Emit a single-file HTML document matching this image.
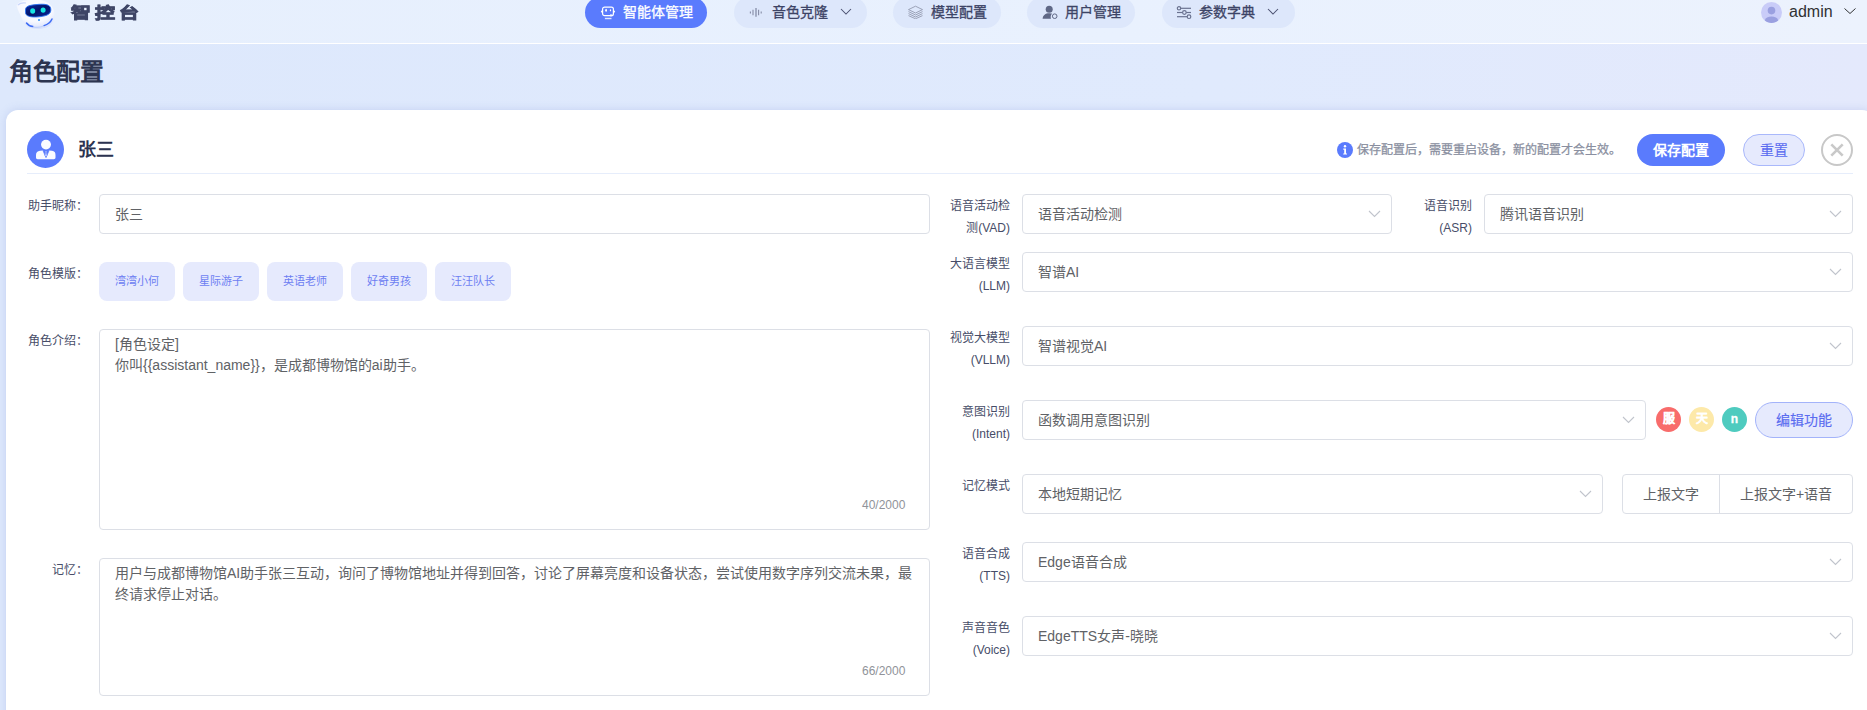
<!DOCTYPE html>
<html lang="zh-CN"><head><meta charset="utf-8">
<style>
*{box-sizing:border-box;margin:0;padding:0}
html,body{width:1867px;height:710px;overflow:hidden}
body{position:relative;font-family:"Liberation Sans",sans-serif;background:linear-gradient(90deg,#dde8fc 0%,#e0eafd 65%,#e4e9fc 100%);color:#303133}
.abs{position:absolute}
#hdr{position:absolute;left:0;top:0;width:1867px;height:44px;background:linear-gradient(90deg,#e6effd,#e9f1fe 60%,#ecf2fd);border-bottom:1px solid #fff}
.pill{position:absolute;top:-3px;height:31px;border-radius:16px;background:#dde7fb;color:#3d4466;font-size:14px;font-weight:500;line-height:31px;white-space:nowrap}
.pill.active{background:#5a7bfd;color:#fff}
.pill span{position:absolute;top:0;-webkit-text-stroke:0.3px currentColor}
.chev{position:absolute}
#title{position:absolute;left:9px;top:55px;font-size:24px;font-weight:700;color:#2c3450;line-height:34px;letter-spacing:-0.5px}
#card{position:absolute;left:6px;top:110px;width:1868px;height:640px;background:#fff;border-radius:12px;box-shadow:0 0 8px rgba(120,140,210,.25)}
.lbl{position:absolute;font-size:12px;color:#474d68;line-height:22px;text-align:right;white-space:nowrap}
.box{position:absolute;border:1px solid #dcdfe6;border-radius:4px;background:#fff}
.val{position:absolute;font-size:14px;color:#606266;white-space:nowrap;line-height:20px}
.tag{position:absolute;top:262px;width:76px;height:39px;border-radius:8px;background:#e6eafd;color:#6d7ef2;font-size:11px;line-height:38px;text-align:center}
.circ{width:25px;height:25px;border-radius:50%;color:#fff;font-size:12px;font-weight:700;text-align:center;line-height:25px;-webkit-text-stroke:0.3px #fff}
.sel-chev{position:absolute;width:11px;height:7px}
</style></head>
<body>
<div id="hdr">
<svg class="abs" style="left:0;top:0" width="60" height="32" viewBox="0 0 60 32">
 <defs>
  <radialGradient id="hg" cx="50%" cy="30%" r="70%"><stop offset="0" stop-color="#ffffff"/><stop offset=".65" stop-color="#f6f8ff"/><stop offset="1" stop-color="#d6dffc"/></radialGradient>
  <linearGradient id="vg" x1="0" y1="0" x2="1" y2="1"><stop offset="0" stop-color="#0c2aa0"/><stop offset=".5" stop-color="#03156a"/><stop offset="1" stop-color="#0a2a9a"/></linearGradient>
  <filter id="gl" x="-50%" y="-50%" width="200%" height="200%"><feGaussianBlur stdDeviation="0.5"/></filter>
 </defs>
 <path d="M16.5 5.5 C18 2 24 0 33 -0.5 C45 -1 54 4 54.5 14 C55 23 48 29 38 29 C29 29 23.5 25 22 19 C21 15 17.5 11 16.5 5.5Z" fill="url(#hg)"/>
 <path d="M18 5 C20 3 23 2.5 26 3" stroke="#c9d6fb" stroke-width="1.2" fill="none"/>
 <path d="M25.5 10 C25.5 6.5 28.5 5.3 36 4.6 C44 3.8 50.5 4 50.8 9 C51.2 13.8 48 15.8 39 16.8 C30 17.6 25.5 16 25.5 12.5Z" fill="url(#vg)" stroke="#2b74f3" stroke-width="0.9"/>
 <g filter="url(#gl)">
 <ellipse cx="32.7" cy="11" rx="2.5" ry="2.7" fill="#17e6e2"/>
 <ellipse cx="43.1" cy="10.1" rx="2.5" ry="2.7" fill="#17e6e2"/>
 </g>
 <circle cx="39" cy="20" r="1" fill="#2a8cf5"/>
 <path d="M26.5 23 C28 25 30 26.3 33 26.6" stroke="#3d6cf4" stroke-width="1.5" fill="none" stroke-linecap="round"/>
 <path d="M44 25.6 C47.5 24.5 50.5 22.5 52 19" stroke="#3d6cf4" stroke-width="1.5" fill="none" stroke-linecap="round"/>
 <path d="M33 26.8 C36 27.6 40 27.6 43.5 26" stroke="#bfd0fa" stroke-width="1.3" fill="none"/>
</svg>
<div class="abs" style="left:71px;top:0.5px;font-size:18px;font-weight:900;color:#3e4566;letter-spacing:3.8px;line-height:24px;white-space:nowrap;-webkit-text-stroke:0.9px #3e4566;transform:scale(1.11,0.85);transform-origin:0 50%">智控台</div>

<div class="pill active" style="left:585px;width:122px">
 <svg class="abs" style="left:15px;top:8.5px" width="16" height="14" viewBox="0 0 16 14">
  <rect x="2.6" y="1.1" width="10.8" height="8.6" rx="2" fill="none" stroke="#fff" stroke-width="1.2"/>
  <path d="M2 4.3 L0.8 5.6 L2 6.9Z" fill="#fff"/>
  <path d="M14 4.3 L15.2 5.6 L14 6.9Z" fill="#fff"/>
  <ellipse cx="6.1" cy="4.3" rx="0.9" ry="1.5" fill="#fff"/>
  <ellipse cx="10.5" cy="4.3" rx="0.7" ry="1.1" fill="#fff"/>
  <circle cx="11" cy="9.4" r="1.1" fill="#fff"/>
  <rect x="4.9" y="11.8" width="6.6" height="1.4" fill="#dfe5ff"/>
 </svg>
 <span style="left:38px;font-weight:500">智能体管理</span>
</div>

<div class="pill" style="left:734px;width:133px">
 <svg class="abs" style="left:15px;top:6px" width="14" height="14" viewBox="0 0 14 14">
  <g stroke="#858ca6" stroke-linecap="butt">
   <line x1="1.4" y1="8.4" x2="1.4" y2="10.6" stroke-width="1.1"/>
   <line x1="4" y1="6.8" x2="4" y2="12.2" stroke-width="1.1"/>
   <line x1="7" y1="5" x2="7" y2="13.8" stroke-width="1.3"/>
   <line x1="9.6" y1="6.8" x2="9.6" y2="12.2" stroke-width="1.1"/>
   <line x1="12.2" y1="8.4" x2="12.2" y2="10.6" stroke-width="1.1"/>
  </g>
 </svg>
 <span style="left:38px">音色克隆</span>
 <svg class="abs" style="left:106px;top:11px" width="12" height="7" viewBox="0 0 12 7"><path d="M1 1 L6 6 L11 1" fill="none" stroke="#4a5070" stroke-width="1.05"/></svg>
</div>

<div class="pill" style="left:893px;width:108px">
 <svg class="abs" style="left:14px;top:8px" width="17" height="14" viewBox="0 0 17 14">
  <g fill="none" stroke="#8a90a6" stroke-width="0.8">
   <path d="M1.5 4.6 L8.5 1.2 L15.5 4.6 L8.5 8Z"/>
   <path d="M1.5 6.6 L8.5 10 L15.5 6.6"/>
   <path d="M1.5 8.6 L8.5 12 L15.5 8.6"/>
   <path d="M1.5 10.6 L8.5 13.8 L15.5 10.6"/>
  </g>
 </svg>
 <span style="left:38px">模型配置</span>
</div>

<div class="pill" style="left:1027px;width:108px">
 <svg class="abs" style="left:14px;top:8px" width="17" height="14" viewBox="0 0 17 14">
  <circle cx="8.2" cy="4.2" r="3.5" fill="#5f6886"/>
  <path d="M1.6 13.8 C2 10 4.5 8.2 8 8.2 C9.5 8.2 10.5 8.4 11.2 8.7 C9.8 9.6 9.3 11.5 10 13.8Z" fill="#5f6886"/>
  <circle cx="13.7" cy="11.2" r="2.3" fill="none" stroke="#5f6886" stroke-width="1"/>
 </svg>
 <span style="left:38px">用户管理</span>
</div>

<div class="pill" style="left:1162px;width:133px">
 <svg class="abs" style="left:14px;top:9px" width="16" height="14" viewBox="0 0 16 14">
  <g fill="none" stroke="#6a7290" stroke-width="1.2">
   <line x1="4.6" y1="2.3" x2="15" y2="2.3"/>
   <circle cx="3" cy="2.3" r="1.7"/>
   <line x1="1" y1="6.5" x2="6.6" y2="6.5"/><line x1="10.2" y1="6.5" x2="15" y2="6.5"/>
   <circle cx="8.4" cy="6.5" r="1.8"/>
   <line x1="1" y1="10.7" x2="11.2" y2="10.7"/>
   <circle cx="13" cy="10.7" r="1.8"/>
  </g>
 </svg>
 <span style="left:37px">参数字典</span>
 <svg class="abs" style="left:105px;top:11px" width="12" height="7" viewBox="0 0 12 7"><path d="M1 1 L6 6 L11 1" fill="none" stroke="#4a5070" stroke-width="1.05"/></svg>
</div>

<svg class="abs" style="left:1761px;top:2px" width="21" height="21" viewBox="0 0 21 21">
 <circle cx="10.5" cy="10.5" r="10.5" fill="#c9ccf8"/>
 <circle cx="10.5" cy="8.6" r="3.8" fill="#9aa0e0"/>
 <path d="M3.8 18.6 C4.5 15.6 7 14.6 10.5 14.6 C14 14.6 16.5 15.6 17.2 18.6 C15.5 20.3 13 21 10.5 21 C8 21 5.5 20.3 3.8 18.6Z" fill="#9aa0e0"/>
</svg>
<div class="abs" style="left:1789px;top:2px;font-size:16px;color:#303133;line-height:20px">admin</div>
<svg class="abs" style="left:1843px;top:7px" width="14" height="8" viewBox="0 0 14 8"><path d="M1.5 1.5 L7 6.5 L12.5 1.5" fill="none" stroke="#303133" stroke-width="1"/></svg>
</div>
<div id="title">角色配置</div>
<div id="card"></div>
<svg class="abs" style="left:27px;top:131px" width="37" height="37" viewBox="0 0 37 37">
 <circle cx="18.5" cy="18.5" r="18.5" fill="#5a7bfd"/>
 <ellipse cx="19" cy="13.6" rx="5" ry="4.8" fill="#fafbff"/>
 <path d="M9 24 C9 21.5 10.5 20.2 13 19.8 L16 19.6 L19 26.6 L22 19.6 L25 19.8 C27.5 20.2 28.5 21.5 28.5 24 L28.5 26.6 C28.5 27.6 27.8 28.2 26.8 28.2 L10.7 28.2 C9.7 28.2 9 27.6 9 26.6Z" fill="#fafbff"/>
 <path d="M16 19.6 L19 26.6 L22 19.6" fill="none" stroke="#5a7bfd" stroke-width="0.8"/>
 <path d="M18.2 20 L19.8 20 L19.4 21.4 L19.9 24.5 L19 25.8 L18.1 24.5 L18.6 21.4Z" fill="#fafbff" stroke="#5a7bfd" stroke-width="0.5"/>
</svg>
<div class="abs" style="left:78px;top:136px;font-size:18px;font-weight:700;color:#2c3350;line-height:28px">张三</div>
<div class="abs" style="left:27px;top:173px;width:1826px;height:1px;background:#e6edfb"></div>

<svg class="abs" style="left:1337px;top:142px" width="16" height="16" viewBox="0 0 16 16">
 <circle cx="8" cy="8" r="8" fill="#5a7bfd"/>
 <circle cx="8" cy="4.3" r="1.2" fill="#fff"/>
 <path d="M6.3 6.6 L9 6.6 L9 11.4 L10 11.4 L10 12.5 L6.2 12.5 L6.2 11.4 L7.2 11.4 L7.2 7.7 L6.3 7.7Z" fill="#fff"/>
</svg>
<div class="abs" style="left:1357px;top:140px;font-size:12px;font-weight:500;color:#8a8fa0;line-height:20px;white-space:nowrap;-webkit-text-stroke:0.25px #8a8fa0">保存配置后，需要重启设备，新的配置才会生效。</div>
<div class="abs" style="left:1637px;top:134px;width:88px;height:32px;border-radius:16px;background:#5a7bfd;color:#fff;font-size:14px;font-weight:700;line-height:33px;text-align:center">保存配置</div>
<div class="abs" style="left:1743px;top:134px;width:62px;height:32px;border-radius:16px;background:#e6eafd;border:1px solid #a9b8fb;color:#5a6cf0;font-size:14px;font-weight:500;line-height:30px;text-align:center;-webkit-text-stroke:0.1px #5a6cf0">重置</div>
<svg class="abs" style="left:1821px;top:134px" width="32" height="32" viewBox="0 0 32 32">
 <circle cx="16" cy="16" r="15" fill="#fff" stroke="#c8c8c8" stroke-width="2"/>
 <path d="M10.3 10.3 L21.7 21.7 M21.7 10.3 L10.3 21.7" stroke="#c9c9c9" stroke-width="2.6"/>
</svg>

<div class="lbl" style="right:1779px;top:195px">助手昵称：</div>
<div class="box" style="left:99px;top:194px;width:831px;height:40px"></div>
<div class="val" style="left:115px;top:204px">张三</div>

<div class="lbl" style="right:1779px;top:263px">角色模版：</div>
<div class="tag" style="left:99px">湾湾小何</div>
<div class="tag" style="left:183px">星际游子</div>
<div class="tag" style="left:267px">英语老师</div>
<div class="tag" style="left:351px">好奇男孩</div>
<div class="tag" style="left:435px">汪汪队长</div>

<div class="lbl" style="right:1779px;top:330px">角色介绍：</div>
<div class="box" style="left:99px;top:329px;width:831px;height:201px"></div>
<div class="val" style="left:115px;top:334px;line-height:21px">[角色设定]<br>你叫{{assistant_name}}，是成都博物馆的ai助手。</div>
<div class="abs" style="left:862px;top:496px;font-size:12px;color:#909399;line-height:18px">40/2000</div>

<div class="lbl" style="right:1779px;top:559px">记忆：</div>
<div class="box" style="left:99px;top:558px;width:831px;height:138px"></div>
<div class="val" style="left:115px;top:563px;line-height:21px;width:805px;white-space:normal">用户与成都博物馆AI助手张三互动，询问了博物馆地址并得到回答，讨论了屏幕亮度和设备状态，尝试使用数字序列交流未果，最终请求停止对话。</div>
<div class="abs" style="left:862px;top:662px;font-size:12px;color:#909399;line-height:18px">66/2000</div>
<div class="lbl" style="right:857px;top:195px">语音活动检<br>测(VAD)</div><div class="box" style="left:1022px;top:194px;width:370px;height:40px"></div><div class="val" style="left:1038px;top:204px">语音活动检测</div><svg class="abs" style="left:1368px;top:210px" width="13" height="8" viewBox="0 0 13 8"><path d="M1 1 L6.5 6.5 L12 1" fill="none" stroke="#c0c4cc" stroke-width="1.1"/></svg><div class="lbl" style="right:395px;top:195px">语音识别<br>(ASR)</div><div class="box" style="left:1484px;top:194px;width:369px;height:40px"></div><div class="val" style="left:1500px;top:204px">腾讯语音识别</div><svg class="abs" style="left:1829px;top:210px" width="13" height="8" viewBox="0 0 13 8"><path d="M1 1 L6.5 6.5 L12 1" fill="none" stroke="#c0c4cc" stroke-width="1.1"/></svg><div class="lbl" style="right:857px;top:253px">大语言模型<br>(LLM)</div><div class="box" style="left:1022px;top:252px;width:831px;height:40px"></div><div class="val" style="left:1038px;top:262px">智谱AI</div><svg class="abs" style="left:1829px;top:268px" width="13" height="8" viewBox="0 0 13 8"><path d="M1 1 L6.5 6.5 L12 1" fill="none" stroke="#c0c4cc" stroke-width="1.1"/></svg><div class="lbl" style="right:857px;top:327px">视觉大模型<br>(VLLM)</div><div class="box" style="left:1022px;top:326px;width:831px;height:40px"></div><div class="val" style="left:1038px;top:336px">智谱视觉AI</div><svg class="abs" style="left:1829px;top:342px" width="13" height="8" viewBox="0 0 13 8"><path d="M1 1 L6.5 6.5 L12 1" fill="none" stroke="#c0c4cc" stroke-width="1.1"/></svg><div class="lbl" style="right:857px;top:401px">意图识别<br>(Intent)</div><div class="box" style="left:1022px;top:400px;width:624px;height:40px"></div><div class="val" style="left:1038px;top:410px">函数调用意图识别</div><svg class="abs" style="left:1622px;top:416px" width="13" height="8" viewBox="0 0 13 8"><path d="M1 1 L6.5 6.5 L12 1" fill="none" stroke="#c0c4cc" stroke-width="1.1"/></svg><div class="abs circ" style="left:1656px;top:407px;background:#f86c6b">服</div>
<div class="abs circ" style="left:1689px;top:407px;background:#fde9a9">天</div>
<div class="abs circ" style="left:1722px;top:407px;background:#4ecbbf">n</div>
<div class="abs" style="left:1755px;top:402px;width:98px;height:36px;border-radius:18px;background:#e6eafd;border:1px solid #a3b3fa;color:#5a6cf0;font-size:14px;font-weight:500;line-height:34px;text-align:center;-webkit-text-stroke:0.15px #5a6cf0">编辑功能</div>
<div class="lbl" style="right:857px;top:475px">记忆模式</div><div class="box" style="left:1022px;top:474px;width:581px;height:40px"></div><div class="val" style="left:1038px;top:484px">本地短期记忆</div><svg class="abs" style="left:1579px;top:490px" width="13" height="8" viewBox="0 0 13 8"><path d="M1 1 L6.5 6.5 L12 1" fill="none" stroke="#c0c4cc" stroke-width="1.1"/></svg><div class="box" style="left:1622px;top:474px;width:231px;height:40px"></div>
<div class="abs" style="left:1719px;top:475px;width:1px;height:38px;background:#dcdfe6"></div>
<div class="val" style="left:1643px;top:484px">上报文字</div>
<div class="val" style="left:1740px;top:484px">上报文字+语音</div>
<div class="lbl" style="right:857px;top:543px">语音合成<br>(TTS)</div><div class="box" style="left:1022px;top:542px;width:831px;height:40px"></div><div class="val" style="left:1038px;top:552px">Edge语音合成</div><svg class="abs" style="left:1829px;top:558px" width="13" height="8" viewBox="0 0 13 8"><path d="M1 1 L6.5 6.5 L12 1" fill="none" stroke="#c0c4cc" stroke-width="1.1"/></svg><div class="lbl" style="right:857px;top:617px">声音音色<br>(Voice)</div><div class="box" style="left:1022px;top:616px;width:831px;height:40px"></div><div class="val" style="left:1038px;top:626px">EdgeTTS女声-晓晓</div><svg class="abs" style="left:1829px;top:632px" width="13" height="8" viewBox="0 0 13 8"><path d="M1 1 L6.5 6.5 L12 1" fill="none" stroke="#c0c4cc" stroke-width="1.1"/></svg></body></html>
